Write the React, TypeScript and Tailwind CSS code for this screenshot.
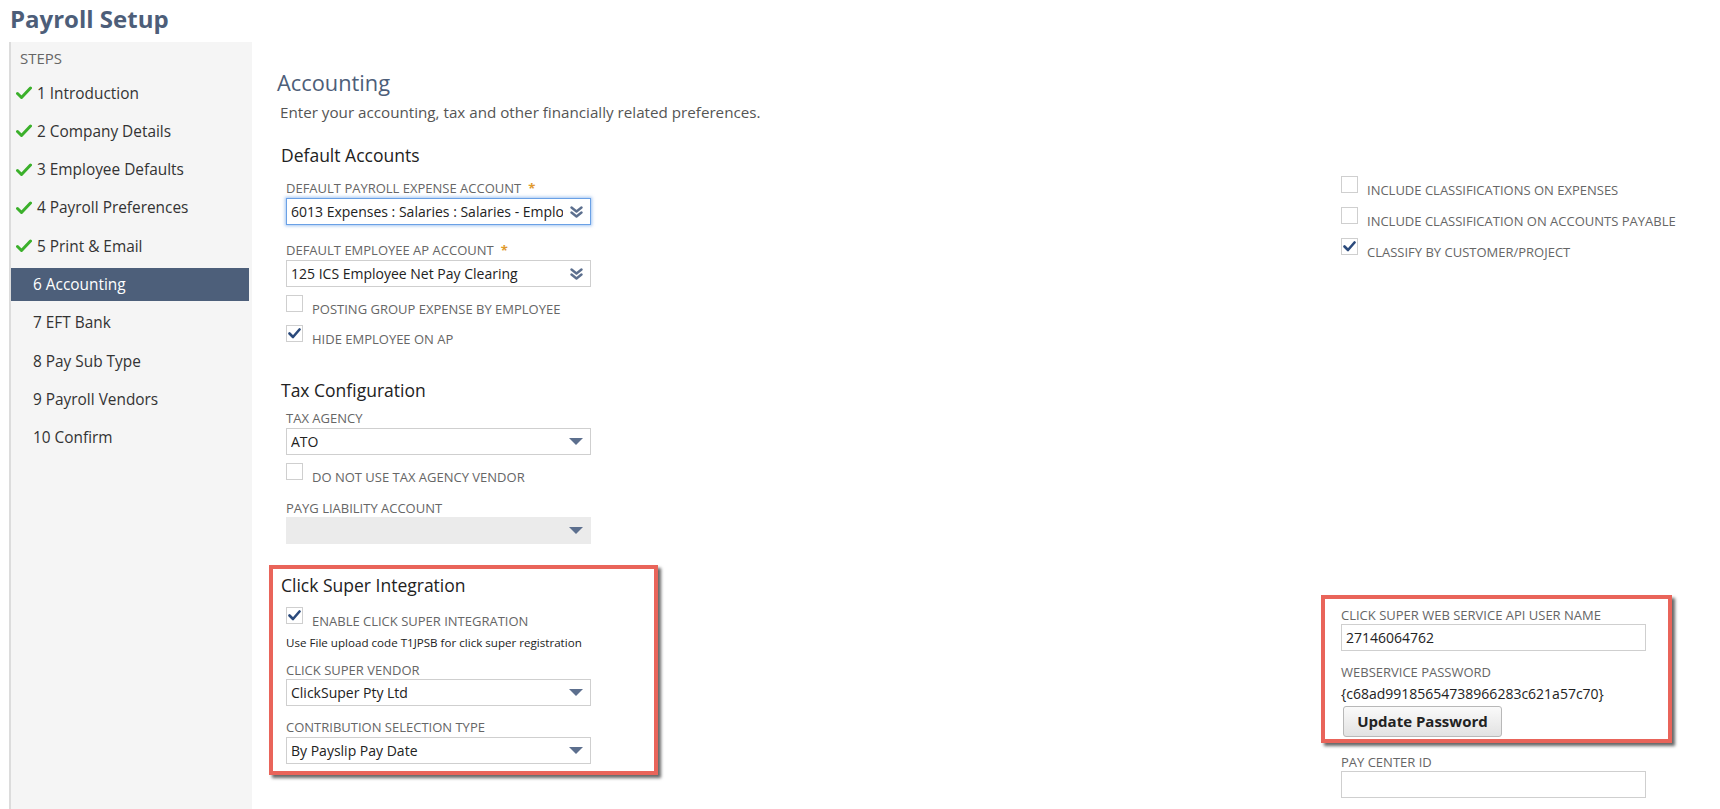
import React from "react";

const steps = [
  { label: "1 Introduction", done: true },
  { label: "2 Company Details", done: true },
  { label: "3 Employee Defaults", done: true },
  { label: "4 Payroll Preferences", done: true },
  { label: "5 Print & Email", done: true },
  { label: "6 Accounting", active: true },
  { label: "7 EFT Bank" },
  { label: "8 Pay Sub Type" },
  { label: "9 Payroll Vendors" },
  { label: "10 Confirm" },
];

function GreenCheck() {
  return (
    <svg width="16" height="14" viewBox="0 0 16 14" className="shrink-0">
      <path d="M1.5 7.5 L5.5 11.5 L14.5 2" fill="none" stroke="#3bb02b" strokeWidth="3" strokeLinecap="round" strokeLinejoin="round" />
    </svg>
  );
}

function BoxCheck() {
  return (
    <svg width="13" height="11" viewBox="0 0 13 11">
      <path d="M1.5 5.5 L5 9 L11.5 1.5" fill="none" stroke="#2b4a7c" strokeWidth="2.6" strokeLinecap="round" strokeLinejoin="round" />
    </svg>
  );
}

function DoubleChevron() {
  return (
    <svg width="13" height="12" viewBox="0 0 13 12">
      <path d="M1.5 1.5 L6.5 5.5 L11.5 1.5" fill="none" stroke="#5c6f8e" strokeWidth="2.4" strokeLinecap="round" strokeLinejoin="round" />
      <path d="M1.5 6.5 L6.5 10.5 L11.5 6.5" fill="none" stroke="#5c6f8e" strokeWidth="2.4" strokeLinecap="round" strokeLinejoin="round" />
    </svg>
  );
}

function Triangle() {
  return (
    <svg width="14" height="7" viewBox="0 0 14 7">
      <path d="M0 0 L14 0 L7 7 Z" fill="#5c6f8e" />
    </svg>
  );
}

function Label({ text, required, className = "" }: { text: string; required?: boolean; className?: string }) {
  return (
    <div className={`h-[18px] text-[13px] leading-[18px] uppercase text-[#666] whitespace-nowrap ${className}`}>
      {text}
      {required && <span className="ml-[7px] font-bold text-[#e09a2e]">*</span>}
    </div>
  );
}

function Select({
  value,
  focused,
  disabled,
  doubleArrow,
  className = "",
}: {
  value?: string;
  focused?: boolean;
  disabled?: boolean;
  doubleArrow?: boolean;
  className?: string;
}) {
  const frame = focused
    ? "border-[#6aa1e6] shadow-[0_0_3px_1px_rgba(90,150,230,0.55)]"
    : disabled
    ? "border-[#ebebeb] bg-[#ebebeb]"
    : "border-[#cfcfcf] bg-white";
  return (
    <div className={`flex h-[27px] w-[305px] items-center border ${frame} pl-[4px] pr-[7px] ${className}`}>
      <div className="flex-1 overflow-hidden whitespace-nowrap text-[14px] leading-[25px] text-[#222]">{value}</div>
      <div className="ml-[6px] flex w-[14px] justify-center">{doubleArrow ? <DoubleChevron /> : <Triangle />}</div>
    </div>
  );
}

function Checkbox({ label, checked, className = "" }: { label: string; checked?: boolean; className?: string }) {
  return (
    <div className={`flex ${className}`}>
      <div className="flex h-[17px] w-[17px] shrink-0 items-center justify-center border border-[#cfcfcf] bg-white">
        {checked && <BoxCheck />}
      </div>
      <div className="ml-[9px] mt-[5px] text-[13px] leading-[18px] uppercase text-[#666] whitespace-nowrap">{label}</div>
    </div>
  );
}

function SectionTitle({ children, className = "" }: { children: React.ReactNode; className?: string }) {
  return <div className={`h-[24px] pl-[4px] text-[17.5px] leading-[24px] text-[#222] ${className}`}>{children}</div>;
}

const callout = "border-4 border-[#e9645a] shadow-[3px_3px_3px_rgba(0,0,0,0.6)]";

export default function App() {
  return (
    <div className="h-[809px] w-[1720px] overflow-hidden bg-white font-['Open_Sans',sans-serif] text-[#333]">
      <h1 className="h-[42px] pl-[10px] pt-[4px] text-[24px] font-bold leading-[30px] text-[#4d5e79]">Payroll Setup</h1>
      <div className="flex h-[767px]">
        {/* wizard steps */}
        <aside className="ml-[9px] w-[243px] shrink-0 border-l-2 border-[#dcdcdc] bg-[#f5f5f5] pr-[3px]">
          <div className="h-[34.5px] pl-[9px] pt-[6px] text-[15px] leading-[20px] text-[#666]">STEPS</div>
          <div className="flex flex-col gap-[5.3px]">
            {steps.map((s) => (
              <div
                key={s.label}
                className={`flex h-[33px] items-center text-[15.4px] leading-[33px] ${
                  s.active ? "bg-[#4d5f7a] pl-[22px] text-white" : s.done ? "pl-[5px] text-[#333]" : "pl-[22px] text-[#333]"
                }`}
              >
                {s.done && <span className="mr-[5px] flex items-center"><GreenCheck /></span>}
                {s.label}
              </div>
            ))}
          </div>
        </aside>

        <main className="flex-1 pl-[25px]">
          <div className="mt-[27px] h-[28px] text-[21.8px] leading-[28px] text-[#4d5e79]">Accounting</div>
          <div className="mt-[5px] pl-[3px] text-[15.2px] leading-[20px] text-[#555]">
            Enter your accounting, tax and other financially related preferences.
          </div>

          {/* default accounts */}
          <div className="mt-[21px] flex">
            <div className="w-[1044px] shrink-0">
              <SectionTitle>Default Accounts</SectionTitle>
              <div className="pl-[9px]">
                <Label text="Default Payroll Expense Account" required className="mt-[12px]" />
                <Select value="6013 Expenses : Salaries : Salaries - Employees" focused doubleArrow className="mt-[1px]" />
                <Label text="Default Employee AP Account" required className="mt-[16px]" />
                <Select value="125 ICS Employee Net Pay Clearing" doubleArrow className="mt-[1px]" />
                <Checkbox label="Posting Group Expense by Employee" className="mt-[8px] h-[30px]" />
                <Checkbox label="Hide Employee on AP" checked className="h-[30px]" />
              </div>
            </div>
            <div className="pl-[20px] pt-[33px]">
              <Checkbox label="Include Classifications on Expenses" className="h-[31px]" />
              <Checkbox label="Include Classification on Accounts Payable" className="h-[31px]" />
              <Checkbox label="Classify by Customer/Project" checked className="h-[31px]" />
            </div>
          </div>

          {/* tax configuration */}
          <SectionTitle className="mt-[23px]">Tax Configuration</SectionTitle>
          <div className="pl-[9px]">
            <Label text="Tax Agency" className="mt-[7px]" />
            <Select value="ATO" className="mt-[1px]" />
            <Checkbox label="Do not use Tax Agency Vendor" className="mt-[8px] h-[30px]" />
            <Label text="PAYG Liability Account" className="mt-[6px]" />
            <Select disabled />
          </div>

          {/* click super */}
          <div className="mt-[21px] flex">
            <div className="w-[1044px] shrink-0">
              <div className={`-ml-[8px] w-[389px] ${callout} pb-[7px] pl-[8px] pt-[4px]`}>
                <div className="h-[24px] text-[17.5px] leading-[24px] text-[#222]">Click Super Integration</div>
                <div className="pl-[5px]">
                  <Checkbox label="Enable Click Super Integration" checked className="mt-[10px] h-[28px]" />
                  <div className="text-[11.6px] leading-[16px] text-[#222]">Use File upload code T1JPSB for click super registration</div>
                  <Label text="Click Super Vendor" className="mt-[10px]" />
                  <Select value="ClickSuper Pty Ltd" />
                  <Label text="Contribution Selection Type" className="mt-[12px]" />
                  <Select value="By Payslip Pay Date" className="mt-[1px]" />
                </div>
              </div>
            </div>
            <div className="pt-[30px]">
              <div className={`w-[351px] ${callout} pb-[2px] pl-[16px] pt-[7px]`}>
                <Label text="Click Super Web Service API User Name" />
                <div className="flex h-[27px] w-[305px] items-center border border-[#cfcfcf] bg-white pl-[4px] text-[14px] text-[#222]">
                  27146064762
                </div>
                <Label text="Webservice Password" className="mt-[12px]" />
                <div className="mt-[4px] h-[18px] text-[14px] leading-[18px] text-[#222]">{"{c68ad99185654738966283c621a57c70}"}</div>
                <button className="ml-[2px] mt-[3px] h-[31px] w-[159px] rounded-[3px] border border-[#b8b8b8] bg-gradient-to-b from-[#fafafa] to-[#e2e2e2] text-[15px] font-bold text-[#222]">
                  Update Password
                </button>
              </div>
              <div className="pl-[20px]">
                <Label text="Pay Center ID" className="mt-[10px]" />
                <div className="h-[27px] w-[305px] border border-[#cfcfcf] bg-white" />
              </div>
            </div>
          </div>
        </main>
      </div>
    </div>
  );
}
